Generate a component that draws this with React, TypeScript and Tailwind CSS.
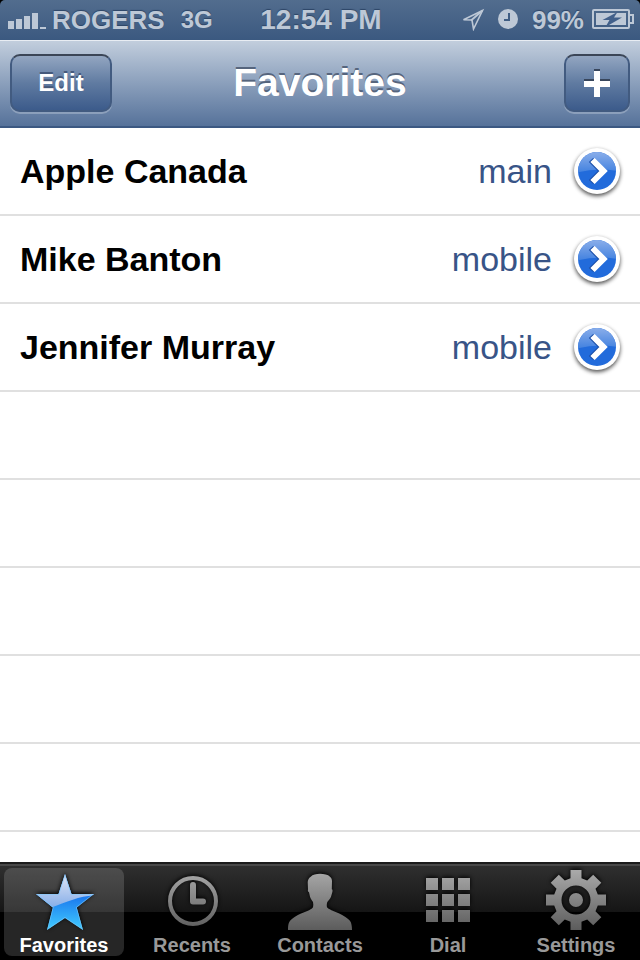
import type { ReactNode } from "react";

const favorites = [
  { name: "Apple Canada", label: "main" },
  { name: "Mike Banton", label: "mobile" },
  { name: "Jennifer Murray", label: "mobile" },
];

const emptyRows = [0, 1, 2, 3, 4];

function SignalIcon() {
  return (
    <svg width="38" height="22" viewBox="0 0 38 22" fill="currentColor" className="mb-0.5" aria-hidden="true">
      <path d="M0 13h6v8H0zM8 11h6v10H8zM16 8h6v13h-6zM24 5h6v16h-6zM32 19h6v2h-6z" />
    </svg>
  );
}

function LocationIcon() {
  return (
    <svg width="26" height="24" viewBox="0 0 26 24" fill="none" className="mb-0.5" aria-hidden="true">
      <path d="M22.500 3.500 3.500 12.700l8.500.3 1.500 9z" stroke="currentColor" strokeWidth="1.600" />
      <path d="M22.500 3.500 11 13.500" stroke="currentColor" strokeWidth="1.800" />
    </svg>
  );
}

function AlarmIcon() {
  return (
    <svg width="20" height="20" viewBox="0 0 20 20" className="mb-0.5" aria-hidden="true">
      <circle cx="10" cy="10" r="10" fill="currentColor" />
      <path d="M11 4v7H6" fill="none" stroke="#3f5d83" strokeWidth="2" />
    </svg>
  );
}

function BatteryIcon() {
  return (
    <svg width="42" height="20" viewBox="0 0 42 20" className="mb-0.5" aria-hidden="true">
      <rect x="1" y="1" width="36" height="18" rx="1" fill="none" stroke="currentColor" strokeWidth="2" />
      <path d="M38 6h3v8h-3" fill="none" stroke="currentColor" strokeWidth="2" />
      <path d="M4 4h30v12H4z" fill="currentColor" />
      <path d="M25.500 3 10.500 11h7L13.500 18 30 8.500h-8z" fill="#42608a" />
    </svg>
  );
}

function Disclosure({ id }: { id: number }) {
  return (
    <svg width="50" height="56" viewBox="0 0 50 56" className="overflow-visible" aria-hidden="true">
      <defs>
        <linearGradient id={`gloss${id}`} gradientUnits="userSpaceOnUse" x1="0" y1="9" x2="0" y2="30">
          <stop offset="0" stopColor="#8aaeea" />
          <stop offset="1" stopColor="#4080df" />
        </linearGradient>
        <clipPath id={`disc${id}`}>
          <circle cx="25" cy="28" r="19" />
        </clipPath>
        <filter id={`shade${id}`} x="-30%" y="-30%" width="160%" height="160%">
          <feGaussianBlur stdDeviation="2" />
        </filter>
      </defs>
      <circle cx="25" cy="30" r="23" fill="#000" opacity="0.7" filter={`url(#shade${id})`} />
      <circle cx="25" cy="28" r="23" fill="#fff" />
      <g clipPath={`url(#disc${id})`}>
        <path d="M0 0h50v56H0z" fill="#226bdb" />
        <path d="M0 0h50v29q-25-6-50 2z" fill={`url(#gloss${id})`} />
      </g>
      <path d="m19 17 11 11-11 11" fill="none" stroke="#1b4fa8" strokeWidth="6" />
      <path d="m20.500 17 11 11-11 11" fill="none" stroke="#fff" strokeWidth="6" />
    </svg>
  );
}

function TabArt({ children }: { children: ReactNode }) {
  return (
    <svg
      width="64"
      height="60"
      viewBox="0 0 64 60"
      className="overflow-visible drop-shadow-[0_-1px_2px_#000]"
      aria-hidden="true"
    >
      <defs>
        <linearGradient id="metal" gradientUnits="userSpaceOnUse" x1="0" y1="0" x2="0" y2="60">
          <stop offset="0" stopColor="#aaa" />
          <stop offset="1" stopColor="#5c5c5c" />
        </linearGradient>
        <linearGradient id="starBase" gradientUnits="userSpaceOnUse" x1="0" y1="26" x2="0" y2="60">
          <stop offset="0" stopColor="#1a78ee" />
          <stop offset="1" stopColor="#41ccff" />
        </linearGradient>
        <linearGradient id="starGloss" gradientUnits="userSpaceOnUse" x1="0" y1="4" x2="0" y2="38">
          <stop offset="0" stopColor="#e0e6f6" />
          <stop offset="1" stopColor="#84ade8" />
        </linearGradient>
        <clipPath id="starClip">
          <path d="M33 4l6.500 20H62L44.800 37.500 51 60 33 48 15 60l5.800-22.500L4 24h22.500z" />
        </clipPath>
      </defs>
      {children}
    </svg>
  );
}

const StarArt = (
  <g clipPath="url(#starClip)">
    <path d="M0 0h64v60H0z" fill="url(#starBase)" />
    <path d="M0 0h64v25C48 26 36 31 18 38H0z" fill="url(#starGloss)" />
    <path
      d="M33 4l6.500 20H62L44.800 37.500 51 60 33 48 15 60l5.800-22.500L4 24h22.500z"
      fill="none"
      stroke="#7cc8fa"
      strokeWidth="1.500"
      opacity="0.7"
    />
  </g>
);

const ClockArt = (
  <g fill="none" stroke="url(#metal)">
    <circle cx="33" cy="31" r="23" strokeWidth="4" />
    <path d="M33 15v16.500h10" strokeWidth="6" strokeLinecap="round" strokeLinejoin="round" />
  </g>
);

const PersonArt = (
  <path
    fill="url(#metal)"
    d="M32 3.700c4 0 8 .8 10 3 1.500 1.300 2 2.600 2 4.600l-.2 8c.9.200.9 1.500.5 3l-1.300 4.400c-.8 2.200-2.300 3.600-3.700 5.300-.5 1.800-.7 3.600-.3 5.300 1.500 1.700 3.800 2.600 6.300 3.700 4 1.700 8 3.200 11.700 5.700 2.500 1.600 4.600 3.200 5.700 5.300.9 2.200 1.300 5 1.300 8H0c0-3 .1-5.800 1.300-8 1.100-2.100 3.200-3.700 5.700-5.300 3.700-2.500 8.300-4 12.300-5.700 2.500-1.100 4.500-2 5.700-3.700.4-1.700.4-3.500 0-5.300-1.200-1.700-2.300-3.100-3-5.300l-1-4.400c-1-.3-1.300-1.700-1-3l-.3-7c0-2.400 1-4.300 3-5.600 2-2.200 5.300-3 9.300-3z"
  />
);

const KeypadArt = (
  <g fill="url(#metal)">
    {[10, 26, 42].map((x) => (
      <g key={x}>
        <path d={`M${x} 8h12v12h-12z`} />
        <path d={`M${x} 24h12v12h-12z`} />
        <path d={`M${x} 40h12v12h-12z`} />
      </g>
    ))}
  </g>
);

const GearArt = (
  <path
    fill="url(#metal)"
    fillRule="evenodd"
    d="M26.500 0h11v8.200l5.700 2.300 6-5.800 8.100 8.100-5.800 6 2.300 5.700H62v11h-8.200l-2.300 5.700 5.800 6-8.100 8.100-6-5.800-5.700 2.300V60h-11v-8.200l-5.700-2.300-6 5.800-8.100-8.100 5.800-6-2.300-5.700H2v-11h8.200l2.300-5.700-5.800-6 8.100-8.100 6 5.800 5.700-2.300zM32 15.500a14.500 14.500 0 1 0 0 29 14.500 14.500 0 1 0 0-29zM32 23a7 7 0 1 1 0 14 7 7 0 1 1 0-14z"
  />
);

const tabs = [
  { name: "Favorites", art: StarArt, current: true },
  { name: "Recents", art: ClockArt, current: false },
  { name: "Contacts", art: PersonArt, current: false },
  { name: "Dial", art: KeypadArt, current: false },
  { name: "Settings", art: GearArt, current: false },
];

const barButton =
  "flex h-[58px] items-center justify-center rounded-[10px] border-2 border-[#425b80] border-t-[#3b4657] bg-linear-to-b from-[#93a6c1] via-[#607ba1] to-[#3c5b8b] text-white shadow-[0_2px_0_rgba(255,255,255,0.25)]";

export default function App() {
  return (
    <div className="flex min-h-screen flex-col bg-black font-['Liberation_Sans',Arial,sans-serif]">
      <div className="flex h-10 items-center rounded-t-[5px] bg-linear-to-b from-[#526d8e] to-[#3b5980] px-2 pr-1.5 font-bold text-[#bdc8d6] [text-shadow:0_-1px_1px_#2d4566]">
        <div className="flex flex-1 items-center">
          <SignalIcon />
          <span className="ml-1.5 text-[26px] leading-10">ROGERS</span>
          <span className="ml-4 text-[24px] leading-10">3G</span>
        </div>
        <time className="text-[28px] leading-10">12:54 PM</time>
        <div className="flex flex-1 items-center justify-end">
          <LocationIcon />
          <span className="ml-3">
            <AlarmIcon />
          </span>
          <span className="mr-2 ml-3.5 text-[26px] leading-10">99%</span>
          <BatteryIcon />
        </div>
      </div>

      <header className="grid h-[88px] grid-cols-[1fr_auto_1fr] items-start border-t border-b-2 border-t-[#e8edf3] border-b-[#3b5882] bg-linear-to-b from-[#c2cedd] to-[#56729a] px-2.5 pt-[13px]">
        <button
          type="button"
          className={`${barButton} w-[102px] text-[24px] font-bold [text-shadow:0_-2px_0_#45597a]`}
        >
          Edit
        </button>
        <h1 className="text-[39px] leading-[58px] font-bold text-white [text-shadow:0_-2px_0_#56657d]">
          Favorites
        </h1>
        <button type="button" aria-label="Add favorite" className={`${barButton} w-[66px] justify-self-end`}>
          <svg width="26" height="28" viewBox="0 0 26 28" aria-hidden="true">
            <path d="M10 0h6v10h10v6H0v-6h10z" fill="#38465c" />
            <path d="M10 2h6v10h10v6H16v10h-6V18H0v-6h10z" fill="#fff" />
          </svg>
        </button>
      </header>

      <main className="flex-1 bg-white">
        <ul>
          {favorites.map((person, i) => (
            <li
              key={person.name}
              className="flex h-[88px] items-center border-b-2 border-[#e0e0e0] pr-[18px] pl-5 text-[34px] leading-10"
            >
              <span className="flex-1 font-bold text-black">{person.name}</span>
              <span className="mr-5 text-[#385487]">{person.label}</span>
              <button type="button" aria-label={`Details for ${person.name}`}>
                <Disclosure id={i} />
              </button>
            </li>
          ))}
          {emptyRows.map((row) => (
            <li key={row} className="h-[88px] border-b-2 border-[#e0e0e0]" />
          ))}
        </ul>
      </main>

      <nav className="grid grid-cols-5 border-t-2 border-[#1c1c1c] bg-[linear-gradient(#484848_0px,#484848_2px,#2f2f2f_2px,#151515_48px,#000_48px)] py-1">
        {tabs.map((tab) => (
          <button
            key={tab.name}
            type="button"
            aria-current={tab.current ? "page" : undefined}
            className={`mx-1 flex h-[88px] flex-col items-center rounded-lg pt-0.5 ${
              tab.current ? "bg-white/15 text-white" : "text-[#999]"
            }`}
          >
            <TabArt>{tab.art}</TabArt>
            <span className="mt-1 text-[20px] leading-[22px] font-bold">{tab.name}</span>
          </button>
        ))}
      </nav>
    </div>
  );
}
